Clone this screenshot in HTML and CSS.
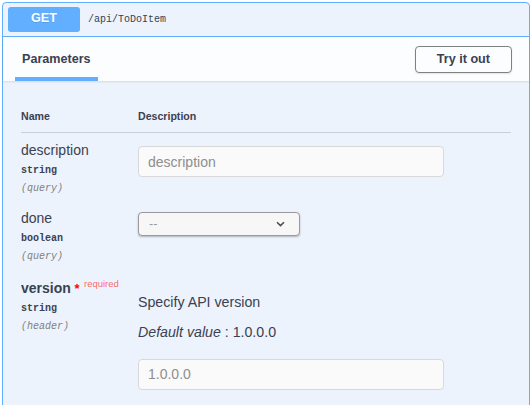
FILE: index.html
```html
<!DOCTYPE html>
<html>
<head>
<meta charset="utf-8">
<link rel="stylesheet" href="styles.css">
</head>
<body>
<div class="opblock">
  <div class="summary">
    <span class="method">GET</span>
    <span class="path">/api/ToDoItem</span>
  </div>
  <div class="section-header">
    <div class="tab">Parameters</div>
    <button class="try-btn" type="button">Try it out</button>
  </div>
  <div class="params">
    <div class="params-head">
      <div class="col-name">Name</div>
      <div class="col-desc">Description</div>
    </div>
    <div class="param-row first">
      <div class="col-name">
        <div class="p-name">description</div>
        <div class="p-type">string</div>
        <div class="p-in">(query)</div>
      </div>
      <div class="col-desc">
        <input class="p-input first" type="text" placeholder="description" disabled>
      </div>
    </div>
    <div class="param-row">
      <div class="col-name">
        <div class="p-name">done</div>
        <div class="p-type">boolean</div>
        <div class="p-in">(query)</div>
      </div>
      <div class="col-desc">
        <div class="p-select">
          <span>--</span>
          <svg class="chev" width="9" height="6" viewBox="0 0 9 6"><path d="M1 1.2 L4.5 4.6 L8 1.2" fill="none" stroke="#4a4a4a" stroke-width="1.5"/></svg>
        </div>
      </div>
    </div>
    <div class="param-row version">
      <div class="col-name">
        <div class="p-name required">version<span class="req-star">&nbsp;*</span><span class="req-label">required</span></div>
        <div class="p-type">string</div>
        <div class="p-in">(header)</div>
      </div>
      <div class="col-desc">
        <p class="p-text">Specify API version</p>
        <p class="p-text p-default"><i>Default value</i> : 1.0.0.0</p>
        <input class="p-input last" type="text" placeholder="1.0.0.0" disabled>
      </div>
    </div>
  </div>
</div>
</body>
</html>
```
FILE: styles.css
```css
* { box-sizing: border-box; }
html, body { margin: 0; background: #fff; }
body { font-family: "Liberation Sans", Arial, sans-serif; color: #3b4151; }

.opblock {
  margin: 2px 2px 0 2px;
  border: 1px solid #61affe;
  border-radius: 4px;
  background: #ecf3fc;
  padding-bottom: 30px;
}

.summary {
  display: flex;
  align-items: baseline;
  padding: 4px 5px;
  border-bottom: 1px solid #61affe;
}
.method {
  display: block;
  width: 72px;
  height: 25px;
  line-height: 23px;
  padding-bottom: 2px;
  text-align: center;
  background: #61affe;
  color: #fff;
  font-weight: 700;
  font-size: 12.6px;
  border-radius: 3px;
  text-shadow: 0 1px 0 rgba(0,0,0,.1);
}
.path {
  margin-left: 8px;
  font-family: "Liberation Mono", monospace;
  font-size: 10px;
  color: #3b4151;
}

.section-header {
  display: flex;
  align-items: center;
  justify-content: space-between;
  height: 44px;
  padding: 0 17px 0 19px;
  background: rgba(255,255,255,.8);
  box-shadow: 0 1px 2px rgba(0,0,0,.1);
}
.tab {
  align-self: stretch;
  display: flex;
  align-items: center;
  position: relative;
  font-size: 12.6px;
  font-weight: 700;
}
.tab::after {
  content: "";
  position: absolute;
  left: -7px;
  right: -7px;
  bottom: 0;
  height: 4px;
  background: #61affe;
}
.try-btn {
  height: 27px;
  padding: 0 21px;
  border: 1px solid #808080;
  border-radius: 4px;
  background: transparent;
  font-family: inherit;
  font-size: 12.6px;
  font-weight: 700;
  color: #3b4151;
  box-shadow: 0 1px 2px rgba(0,0,0,.1);
}

.params { padding: 19px 18px 0; }
.params-head {
  display: flex;
  font-size: 10.6px;
  font-weight: 700;
  line-height: 12px;
  padding: 10px 0;
  border-bottom: 1px solid rgba(59,65,81,.2);
}
.col-name { width: 117px; flex: none; }
.col-desc { flex: 1; min-width: 0; }

.param-row { display: flex; padding: 8px 0 9px; }
.param-row.first { padding: 9px 0 5.5px; }
.param-row.version { padding-top: 6.5px; }

.p-name { font-size: 14px; line-height: 17px; }
.p-name.required { font-weight: 700; }
.req-star { color: #f00; font-size: 13px; }
.req-label {
  color: rgba(255,0,0,.6);
  font-size: 9.5px;
  font-weight: 400;
  line-height: 0;
  vertical-align: 6px;
  padding: 0 4.5px;
}
.p-type {
  font-family: "Liberation Mono", monospace;
  font-size: 10px;
  font-weight: 700;
  line-height: 17px;
  padding-top: 3px;
}
.p-in {
  font-family: "Liberation Mono", monospace;
  font-size: 10px;
  font-style: italic;
  color: #808080;
  line-height: 17px;
  padding-top: 0.5px;
}

.p-input {
  display: block;
  width: 306px;
  height: 31px;
  margin: 0;
  padding: 0 9px;
  border: 1px solid #d9d9d9;
  border-radius: 4px;
  background: #fafafa;
  font-family: inherit;
  font-size: 14px;
  color: #888;
}
.p-input.first { margin-top: 4px; }
.p-input.last { margin-top: 18.5px; }
.p-input::placeholder { color: #8e8e8e; opacity: 1; }

.p-select {
  display: flex;
  align-items: center;
  justify-content: space-between;
  width: 162px;
  height: 24px;
  margin-top: 1.5px;
  padding: 0 14px 0 10px;
  border: 1px solid #9a9a9a;
  border-radius: 4px;
  background: #f7f7f7;
  box-shadow: 0 1px 2px rgba(0,0,0,.25);
  font-size: 12.6px;
  color: #9a9a9a;
}
.chev { display: block; }

.p-text {
  margin: 14px 0 0;
  font-size: 14.2px;
  line-height: 16px;
}
.p-text.p-default { margin-top: 14px; }
```
